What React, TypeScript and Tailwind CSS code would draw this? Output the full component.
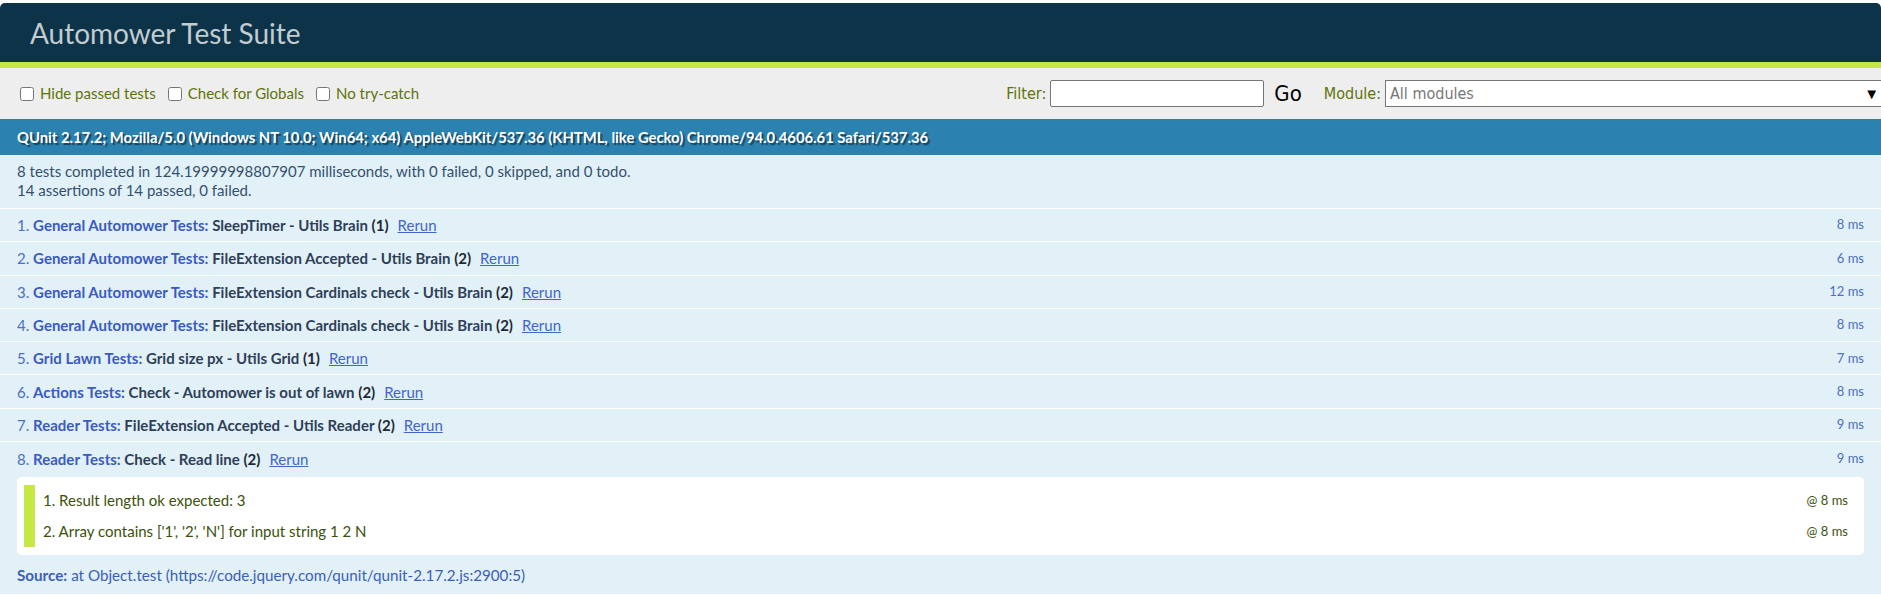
import React from 'react';

type TestRow = {
  n: number;
  module: string;
  name: string;
  count: number;
  ms: number;
};

const tests: TestRow[] = [
  { n: 1, module: 'General Automower Tests', name: 'SleepTimer - Utils Brain', count: 1, ms: 8 },
  { n: 2, module: 'General Automower Tests', name: 'FileExtension Accepted - Utils Brain', count: 2, ms: 6 },
  { n: 3, module: 'General Automower Tests', name: 'FileExtension Cardinals check - Utils Brain', count: 2, ms: 12 },
  { n: 4, module: 'General Automower Tests', name: 'FileExtension Cardinals check - Utils Brain', count: 2, ms: 8 },
  { n: 5, module: 'Grid Lawn Tests', name: 'Grid size px - Utils Grid', count: 1, ms: 7 },
  { n: 6, module: 'Actions Tests', name: 'Check - Automower is out of lawn', count: 2, ms: 8 },
  { n: 7, module: 'Reader Tests', name: 'FileExtension Accepted - Utils Reader', count: 2, ms: 9 },
  { n: 8, module: 'Reader Tests', name: 'Check - Read line', count: 2, ms: 9 },
];

const assertions = [
  'Result length ok expected: 3',
  "Array contains ['1', '2', 'N'] for input string 1 2 N",
];

const narrow = "font-['Liberation_Sans_Narrow','DejaVu_Sans_Condensed','Roboto',sans-serif]";

const TestLine: React.FC<{ t: TestRow }> = ({ t }) => (
  <div className="flex items-center justify-between">
    <div className="text-[15px] leading-5 whitespace-nowrap">
      <span className="text-[#4a6fc0]">{t.n}. </span>
      <strong className="font-bold">
        <span className="text-[#3a5bbf]">{t.module}: </span>
        <span className="text-[#2e3f57]">{t.name} </span>
        <span className="text-[#1d2935]">({t.count})</span>
      </strong>
      <a href="#" className="ml-[9px] text-[#4166c7] underline">Rerun</a>
    </div>
    <span className="text-[13px] text-[#4f6fbf]">{t.ms} ms</span>
  </div>
);

export default function App() {
  return (
    <div className="min-h-screen bg-white pt-[3px] font-['Lato','Open_Sans',sans-serif]">
      {/* header */}
      <h1 className="h-[59px] rounded-t-[5px] bg-[#0D3349] pl-[30px] flex items-center text-[28px] font-normal text-[#C2CCD1]">
        Automower Test Suite
      </h1>
      <div className="h-[6px] bg-[#C6E746]" />

      {/* toolbar */}
      <div className="h-[51px] bg-[#EEEEEE] flex items-center pl-[20px] text-[15px] text-[#5E740B]">
        <label className="flex items-center">
          <input type="checkbox" className="w-[14px] h-[14px] mr-[6px]" />
          Hide passed tests
        </label>
        <label className="flex items-center ml-[12px]">
          <input type="checkbox" className="w-[14px] h-[14px] mr-[6px]" />
          Check for Globals
        </label>
        <label className="flex items-center ml-[12px]">
          <input type="checkbox" className="w-[14px] h-[14px] mr-[6px]" />
          No try-catch
        </label>

        <div className="ml-auto flex items-center">
          <span className={`${narrow} text-[16px] mr-[4px]`}>Filter:</span>
          <input type="text" className="w-[214px] h-[27px] bg-white border border-[#767676] rounded-[2px]" />
          <span className={`${narrow} text-[22px] text-black ml-[10px] mr-[22px]`}>Go</span>
          <span className={`${narrow} text-[16px] mr-[4px]`}>Module:</span>
          <div className="w-[496px] h-[27px] bg-white border border-[#767676] border-r-0 flex items-center justify-between pl-[4px] pr-[2px]">
            <span className={`${narrow} text-[16px] text-[#777]`}>All modules</span>
            <span className="text-[15px] text-black">▼</span>
          </div>
        </div>
      </div>

      {/* user agent */}
      <div className="h-[36px] bg-[#2B81AF] flex items-center pl-[17px] text-[14.8px] font-bold text-white [text-shadow:2px_2px_1px_rgba(0,0,0,0.5)]">
        QUnit 2.17.2; Mozilla/5.0 (Windows NT 10.0; Win64; x64) AppleWebKit/537.36 (KHTML, like Gecko) Chrome/94.0.4606.61 Safari/537.36
      </div>

      {/* result summary */}
      <div className="bg-[#E2F0F7] border-b border-white pl-[17px] pt-[7px] pb-[8px] text-[15px] leading-[19px] text-[#34506e]">
        <div>8 tests completed in 124.19999998807907 milliseconds, with 0 failed, 0 skipped, and 0 todo.</div>
        <div>14 assertions of 14 passed, 0 failed.</div>
      </div>

      {/* tests */}
      <ol>
        {tests.map((t) =>
          t.n < 8 ? (
            <li key={t.n} className="h-[33.3px] bg-[#E2F0F7] border-b border-white px-[17px] flex flex-col justify-center">
              <TestLine t={t} />
            </li>
          ) : (
            <li key={t.n} className="bg-[#E2F0F7] px-[17px] pb-[9px]">
              <div className="h-[34px] flex flex-col justify-center">
                <TestLine t={t} />
              </div>
              <ol className="mt-px bg-white rounded-[5px] px-[7px] py-[8px]">
                {assertions.map((a, i) => (
                  <li
                    key={i}
                    className="h-[31px] border-l-[11px] border-[#C6E746] pl-[8px] pr-[9px] flex items-center justify-between text-[15px] text-[#3C510C]"
                  >
                    <span>{i + 1}. {a}</span>
                    <span className="text-[13px]">@ 8 ms</span>
                  </li>
                ))}
              </ol>
              <div className="mt-[10px] text-[15.2px] leading-5 text-[#3b5fb5]">
                <strong className="font-bold">Source:</strong> at Object.test (https://code.jquery.com/qunit/qunit-2.17.2.js:2900:5)
              </div>
            </li>
          )
        )}
      </ol>
    </div>
  );
}
